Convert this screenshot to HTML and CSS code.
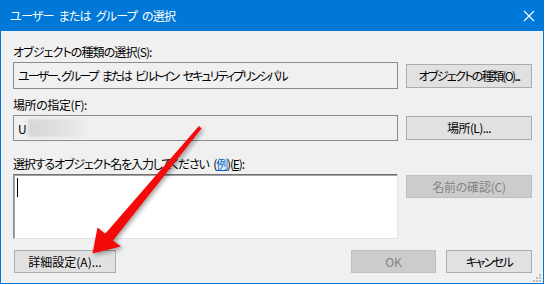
FILE: index.html
```html
<!DOCTYPE html>
<html lang="ja">
<head>
<meta charset="utf-8">
<title>ユーザー または グループ の選択</title>
<link rel="stylesheet" href="styles.css">
</head>
<body>
<div class="window">
  <div class="titlebar">
    <span class="title">ユーザー または グループ の選択</span>
    <svg class="close" width="12" height="12" viewBox="0 0 12 12"><path d="M1 1 L11 11 M11 1 L1 11" stroke="#fff" stroke-width="1.1" fill="none"/></svg>
  </div>
  <div class="content">
    <div class="label l1">オブジェクトの種類の選択(S):</div>
    <div class="row r1">
      <div class="field ro f1">ユーザー、グループ または ビルトイン セキュリティプリンシパル</div>
      <button class="btn tall b-type">オブジェクトの種類(O)...</button>
    </div>
    <div class="label l2">場所の指定(F):</div>
    <div class="row r2">
      <div class="field ro f2">U<span class="blur"></span></div>
      <button class="btn tall b-loc">場所(L)...</button>
    </div>
    <div class="label l3">選択するオブジェクト名を入力してください (<a class="link">例</a>)(<u>E</u>):</div>
    <div class="row r3">
      <div class="textarea"><span class="caret"></span></div>
      <button class="btn disabled b-check">名前の確認(C)</button>
    </div>
    <div class="footer">
      <button class="btn adv">詳細設定(A)...</button>
      <div class="actions">
        <button class="btn disabled ok">OK</button>
        <button class="btn cancel">キャンセル</button>
      </div>
    </div>
  </div>
  <svg class="grip" width="8" height="8" viewBox="0 0 8 8"><g fill="#bdbdbd"><rect x="6" y="0" width="2" height="2"/><rect x="3" y="3" width="2" height="2"/><rect x="6" y="3" width="2" height="2"/><rect x="0" y="6" width="2" height="2"/><rect x="3" y="6" width="2" height="2"/><rect x="6" y="6" width="2" height="2"/></g></svg>
</div>
<svg class="arrow" width="546" height="285" viewBox="0 0 546 285">
  <polygon points="198.9,126 201.6,128.4 113,240.5 121,246.5 92.5,253.5 97.5,227.5 105.2,233.8" fill="#f50a0a"/>
</svg>
</body>
</html>
```
FILE: styles.css
```css
* { box-sizing: border-box; }
html, body { margin: 0; padding: 0; background: #ffffff; }
body {
  width: 546px;
  height: 285px;
  position: relative;
  font-family: "Noto Sans CJK JP", "Noto Sans", sans-serif;
  font-size: 12px;
  font-feature-settings: "palt" 1;
  color: #000;
}
.window {
  position: relative;
  width: 544px;
  height: 284px;
  border: 1px solid #0078d7;
  border-top: none;
  background: #f0f0f0;
  display: flex;
  flex-direction: column;
}
.titlebar {
  height: 31px;
  background: #0078d7;
  color: #fff;
  display: flex;
  align-items: center;
  justify-content: space-between;
  padding: 0 8px 0 9px;
  flex: none;
}
.title { font-size: 12px; line-height: 16px; letter-spacing: -0.75px; word-spacing: 3px; }
.close { display: block; }
.content {
  padding: 13px 11px 0 12px;
  display: flex;
  flex-direction: column;
}
.label { line-height: 16px; height: 16px; margin-bottom: 2px; white-space: nowrap; }
.l1 { letter-spacing: -0.9px; }
.l2 { margin-top: 8px; letter-spacing: -0.4px; }
.l3 { margin-top: 15px; letter-spacing: -1.15px; word-spacing: 3px; }
.row {
  display: grid;
  grid-template-columns: 385px 126px;
  column-gap: 8px;
  align-items: center;
}
.field {
  height: 27px;
  border: 1px solid #8c8c8c;
  background: #f0f0f0;
  padding-left: 4px;
  display: flex;
  align-items: center;
  white-space: nowrap;
  overflow: hidden;
}
.f1 { letter-spacing: -1.9px; word-spacing: 3.5px; }
.f2 { height: 26px; }
.blur {
  display: inline-block;
  width: 58px;
  height: 18px;
  margin-left: 1px;
  background: linear-gradient(to right, #d6d6d6, #e0e0e0 55%, #ececec);
  filter: blur(1.5px);
}
.btn {
  font-family: inherit;
  font-size: 12px;
  font-feature-settings: "palt" 1;
  color: #000;
  background: #e1e1e1;
  border: 1px solid #adadad;
  padding: 0;
  margin: 0;
  height: 23px;
  line-height: 16px;
  white-space: nowrap;
  overflow: visible;
}
.btn.tall { height: 24px; }
.b-type { letter-spacing: -1.65px; }
.b-loc { letter-spacing: -0.6px; }
.b-check { letter-spacing: -0.2px; }
.btn.disabled {
  background: #cccccc;
  border-color: #bfbfbf;
  color: #838383;
}
.r3 { align-items: start; }
.r3 .btn { margin-top: 1px; }
.textarea {
  height: 65px;
  background: #fff;
  border: 1px solid;
  border-color: #6f6f6f #e3e3e3 #e3e3e3 #8f8f8f;
  box-shadow: inset 1px 1px 0 #a3a3a3;
  padding: 3px 0 0 3px;
}
.caret {
  display: block;
  width: 1px;
  height: 19px;
  background: #000;
}
.link { color: #0066cc; text-decoration: underline; }
.footer {
  margin-top: 11px;
  display: flex;
  justify-content: space-between;
  padding-left: 1px;
}
.adv { width: 102px; }
.actions { display: flex; gap: 10px; }
.ok { width: 85px; }
.cancel { width: 86px; letter-spacing: -1.6px; }
.grip { position: absolute; right: 2px; bottom: 1px; }
.arrow {
  position: absolute;
  left: 0;
  top: 0;
  pointer-events: none;
  filter: drop-shadow(2px 2px 2px rgba(0,0,0,0.35));
}
```
